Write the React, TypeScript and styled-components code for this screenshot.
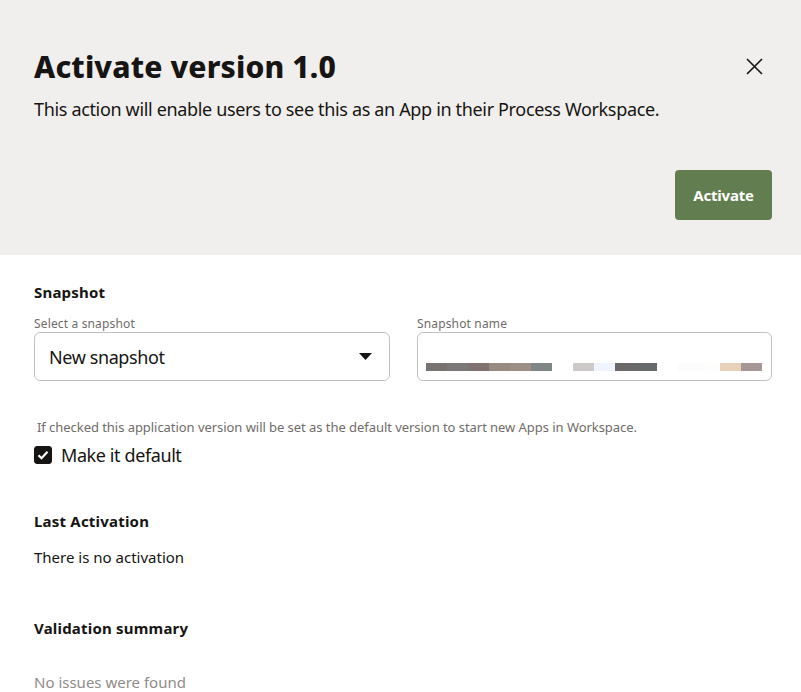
import React, { useState } from 'react'
import styled, { createGlobalStyle } from 'styled-components'

const GlobalStyle = createGlobalStyle`
  html, body {
    margin: 0;
    padding: 0;
    background: #ffffff;
  }
  body {
    font-family: 'Noto Sans', 'Open Sans', sans-serif;
    color: #161513;
  }
  * {
    box-sizing: border-box;
  }
`

const Page = styled.div`
  width: 801px;
  height: 692px;
  overflow: hidden;
  background: #ffffff;
`

const Header = styled.header`
  background: #f1efed;
  padding: 49px 29px 35px 34px;
`

const TitleRow = styled.div`
  display: flex;
  align-items: flex-start;
  justify-content: space-between;
`

const Title = styled.h1`
  margin: 0;
  font-size: 30px;
  line-height: 36px;
  font-weight: 800;
  letter-spacing: 0.15px;
`

const CloseButton = styled.button`
  border: 0;
  background: transparent;
  padding: 0;
  margin: 9px 9px 0 0;
  width: 17px;
  height: 17px;
  display: flex;
  cursor: pointer;
  color: #161513;
`

const Description = styled.p`
  margin: 12px 0 0;
  font-size: 18px;
  line-height: 24px;
  letter-spacing: -0.34px;
`

const Actions = styled.div`
  display: flex;
  justify-content: flex-end;
  margin-top: 49px;
`

const PrimaryButton = styled.button`
  height: 50px;
  width: 97px;
  border: 0;
  border-radius: 4px;
  background: #627d50;
  color: #ffffff;
  font-family: inherit;
  font-size: 15px;
  font-weight: 700;
  letter-spacing: -0.2px;
  cursor: pointer;
`

const Body = styled.main`
  padding: 27px 29px 0 34px;
`

const SectionTitle = styled.h2<{ gap?: number }>`
  margin: ${({ gap }) => gap ?? 0}px 0 0;
  font-size: 15px;
  line-height: 20px;
  font-weight: 700;
  letter-spacing: 0.2px;
`

const FieldGrid = styled.div`
  display: grid;
  grid-template-columns: 356px 355px;
  column-gap: 27px;
  margin-top: 14px;
`

const Field = styled.div`
  display: flex;
  flex-direction: column;
`

const Label = styled.label`
  font-size: 12px;
  line-height: 16px;
  letter-spacing: 0.15px;
  color: #6f6c69;
`

const Box = styled.div`
  height: 49px;
  border: 1px solid #c4c2c0;
  border-radius: 6px;
  background: #ffffff;
  display: flex;
  align-items: center;
`

const SelectBox = styled(Box)`
  padding: 0 17px 0 14px;
  justify-content: space-between;
  font-size: 18px;
  letter-spacing: -0.4px;
`

const NameBox = styled(Box)`
  padding: 20px 0 0 8px;
`

const Helper = styled.p`
  margin: 37px 0 0;
  padding-left: 3px;
  font-size: 13px;
  line-height: 18px;
  letter-spacing: -0.05px;
  color: #6f6c69;
`

const CheckRow = styled.label`
  display: flex;
  align-items: center;
  gap: 9px;
  margin-top: 7px;
  font-size: 18px;
  line-height: 24px;
  letter-spacing: -0.4px;
  cursor: pointer;
`

const CheckBox = styled.span<{ checked: boolean }>`
  width: 18px;
  height: 18px;
  border-radius: 3px;
  background: ${({ checked }) => (checked ? '#161513' : '#ffffff')};
  border: 1px solid #161513;
  display: flex;
  align-items: center;
  justify-content: center;
`

const Text = styled.p<{ gap: number; muted?: boolean }>`
  margin: ${({ gap }) => gap}px 0 0;
  font-size: 15px;
  line-height: 20px;
  color: ${({ muted }) => (muted ? '#8f8c89' : '#161513')};
`

// pixelated (redacted) snapshot name
const redacted = [
  '#787270', '#7d7878', '#7e716e', '#978a81', '#9a8e87', '#808685', '#ffffff', '#cdc9c8',
  '#eef5fc', '#6a6967', '#666a6b', '#ffffff', '#fbfcfd', '#fdfdfc', '#e9d0b8', '#a69697',
]

export default function App() {
  const [isDefault, setIsDefault] = useState(true)

  return (
    <Page>
      <GlobalStyle />
      <Header>
        <TitleRow>
          <Title>Activate version 1.0</Title>
          <CloseButton aria-label="Close">
            <svg width="17" height="17" viewBox="0 0 17 17" fill="none">
              <path d="M1 1L16 16M16 1L1 16" stroke="currentColor" strokeWidth="1.6" />
            </svg>
          </CloseButton>
        </TitleRow>
        <Description>This action will enable users to see this as an App in their Process Workspace.</Description>
        <Actions>
          <PrimaryButton>Activate</PrimaryButton>
        </Actions>
      </Header>

      <Body>
        <SectionTitle>Snapshot</SectionTitle>
        <FieldGrid>
          <Field>
            <Label>Select a snapshot</Label>
            <SelectBox>
              <span>New snapshot</span>
              <svg width="13" height="7" viewBox="0 0 13 7">
                <path d="M0 0H13L6.5 7Z" fill="#161513" />
              </svg>
            </SelectBox>
          </Field>
          <Field>
            <Label>Snapshot name</Label>
            <NameBox>
              <svg width="336" height="8" viewBox="0 0 336 8">
                {redacted.map((c, i) => (
                  <rect key={i} x={i * 21} y={0} width={21} height={8} fill={c} />
                ))}
              </svg>
            </NameBox>
          </Field>
        </FieldGrid>

        <Helper>If checked this application version will be set as the default version to start new Apps in Workspace.</Helper>
        <CheckRow onClick={() => setIsDefault(!isDefault)}>
          <CheckBox checked={isDefault}>
            {isDefault && (
              <svg width="12" height="10" viewBox="0 0 12 10" fill="none">
                <path d="M1.5 5.2L4.5 8.2L10.5 1.8" stroke="#ffffff" strokeWidth="2.2" />
              </svg>
            )}
          </CheckBox>
          Make it default
        </CheckRow>

        <SectionTitle gap={44}>Last Activation</SectionTitle>
        <Text gap={16}>There is no activation</Text>

        <SectionTitle gap={51}>Validation summary</SectionTitle>
        <Text gap={34} muted>
          No issues were found
        </Text>
      </Body>
    </Page>
  )
}
